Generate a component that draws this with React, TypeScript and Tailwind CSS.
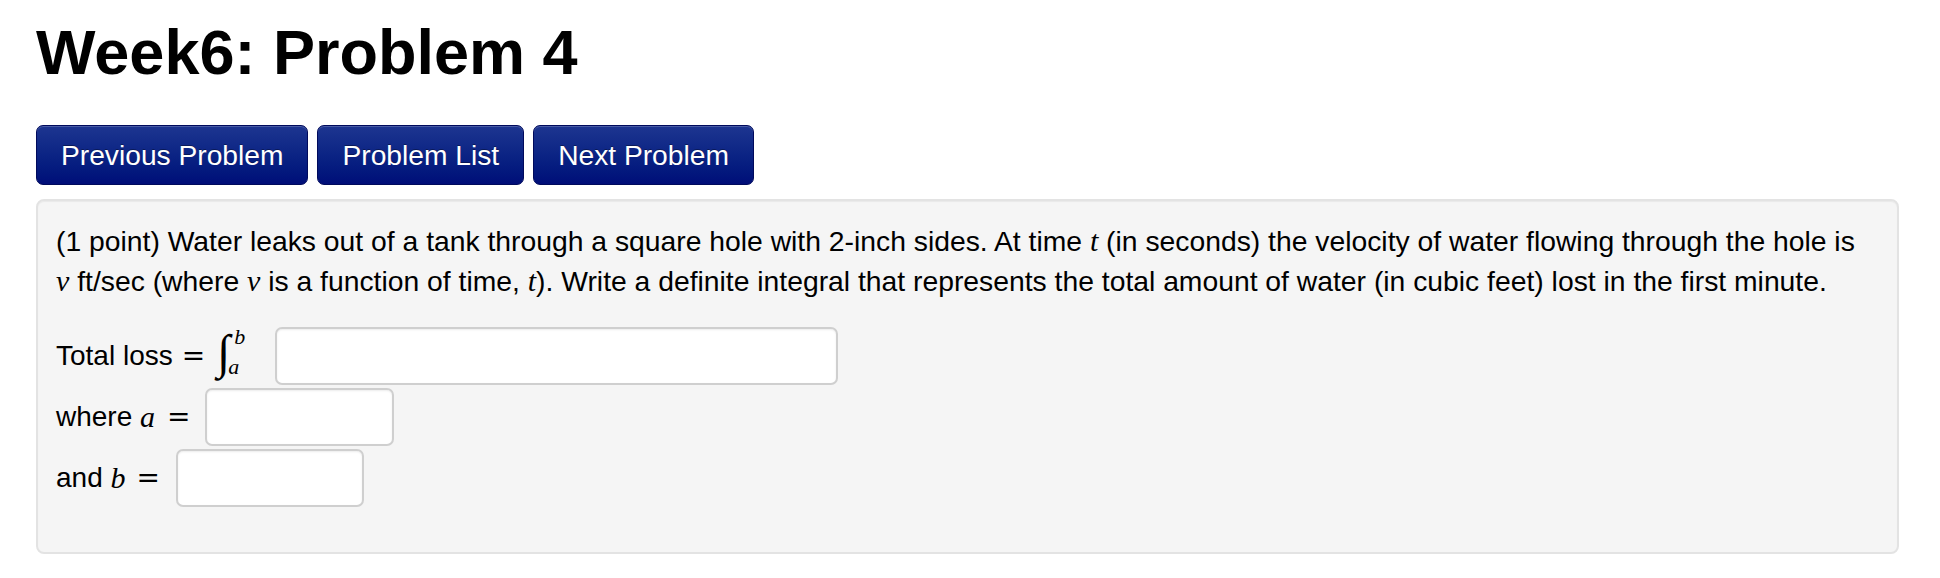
import React from "react";

const SERIF = '"Liberation Serif", "DejaVu Serif", serif';

const M = ({ children }: { children: React.ReactNode }) => (
  <span className="italic text-[30px] leading-none" style={{ fontFamily: SERIF }}>
    {children}
  </span>
);

const Eq = ({ cls }: { cls: string }) => (
  <span className={`${cls} text-[28px]`} style={{ fontFamily: '"DejaVu Serif", serif' }}>
    =
  </span>
);

const Btn = ({ children }: { children: React.ReactNode }) => (
  <button className="h-[60px] px-[24px] rounded-[7px] border border-[#000a5c] bg-gradient-to-b from-[#1d3590] to-[#000d78] text-white text-[28.2px] leading-[40px] [text-shadow:0_-1px_0_rgba(0,0,0,0.35)] shadow-[inset_0_1px_0_rgba(255,255,255,0.2)]">
    {children}
  </button>
);

const Input = ({ w }: { w: string }) => (
  <div className={`${w} h-[58px] bg-white rounded-[7px] border-2 border-[#cfcfcf] shadow-[inset_0_1px_2px_rgba(0,0,0,0.08)]`} />
);

export default function App() {
  return (
    <div className="px-[36px] bg-white text-black" style={{ fontFamily: '"Liberation Sans", Arial, sans-serif' }}>
      <h1 className="text-[63px] font-bold leading-[68px] pt-[18px]">Week6: Problem 4</h1>
      <div className="mt-[39px] flex gap-[9px]">
        <Btn>Previous Problem</Btn>
        <Btn>Problem List</Btn>
        <Btn>Next Problem</Btn>
      </div>
      <div className="mt-[14px] w-[1863px] bg-[#f5f5f5] border-2 border-[#e3e3e3] rounded-[8px] pt-[20px] pb-[45px] px-[18px] shadow-[inset_0_1px_1px_rgba(0,0,0,0.05)]">
        <p className="text-[28.3px] leading-[40px]">
          (1 point) Water leaks out of a tank through a square hole with 2-inch sides. At time <M>t</M> (in seconds) the
          velocity of water flowing through the hole is
          <br />
          <M>v</M> ft/sec (where <M>v</M> is a function of time, <M>t</M>). Write a definite integral that represents the
          total amount of water (in cubic feet) lost in the first minute.
        </p>
        <div className="mt-[25px] flex flex-col gap-[2px] text-[28px]">
          <div className="flex items-center h-[59px]">
            <span>Total loss</span>
            <Eq cls="ml-[9px]" />
            <span className="relative w-[64px] h-[59px] ml-[6px]" style={{ fontFamily: SERIF }}>
              <span className="absolute left-[6px] top-[2px] italic text-[48px] leading-none">∫</span>
              <span className="absolute left-[23px] top-[0px] italic text-[22px] leading-none">b</span>
              <span className="absolute left-[17px] top-[30px] italic text-[22px] leading-none">a</span>
            </span>
            <Input w="w-[563px]" />
          </div>
          <div className="flex items-center h-[59px]">
            <span>where&nbsp;</span>
            <M>a</M>
            <Eq cls="ml-[12px]" />
            <span className="w-[14px]" />
            <Input w="w-[189px]" />
          </div>
          <div className="flex items-center h-[59px]">
            <span>and&nbsp;</span>
            <M>b</M>
            <Eq cls="ml-[11px]" />
            <span className="w-[16px]" />
            <Input w="w-[188px]" />
          </div>
        </div>
      </div>
    </div>
  );
}
